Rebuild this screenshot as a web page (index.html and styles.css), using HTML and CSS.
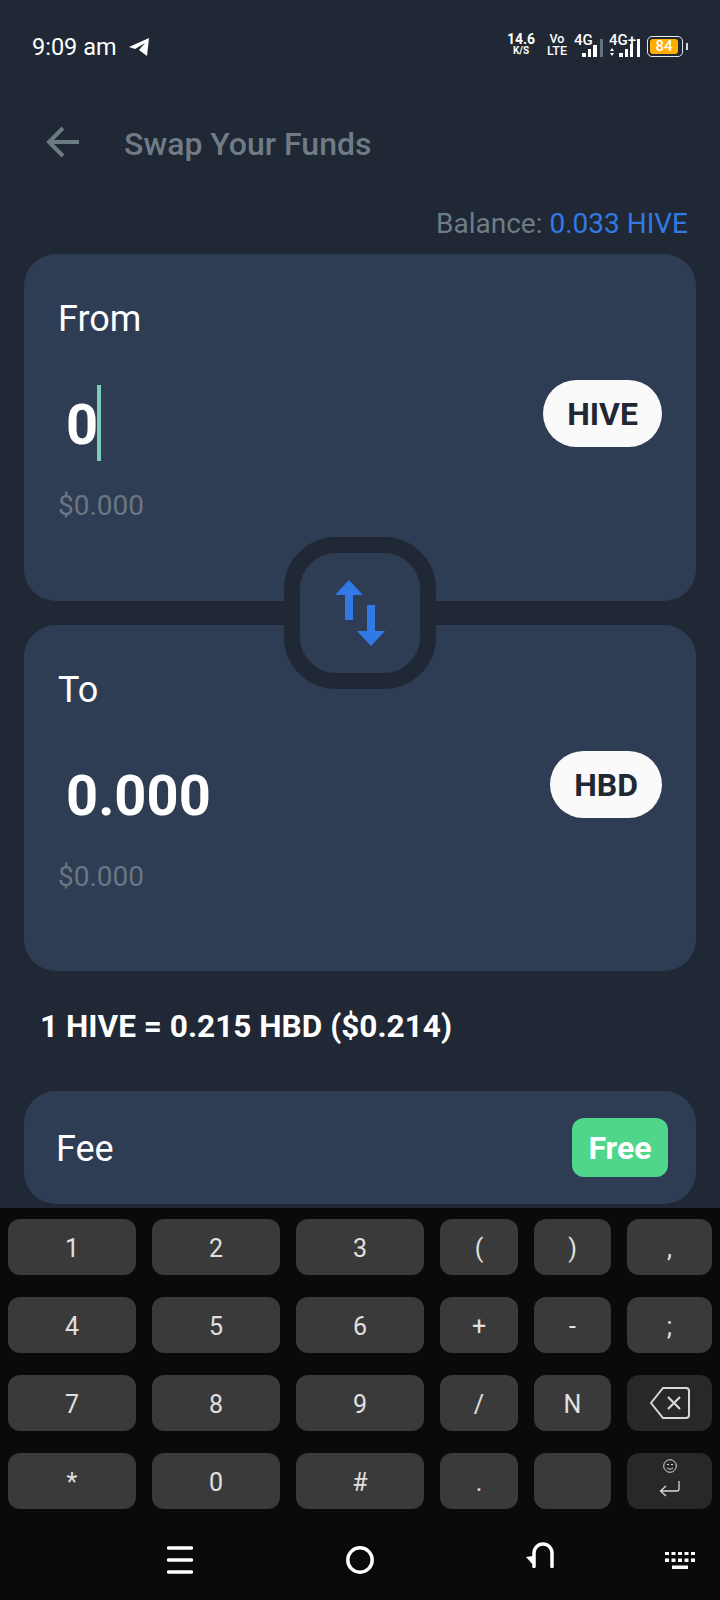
FILE: index.html
```html
<!DOCTYPE html>
<html lang="en">
<head>
    <meta charset="UTF-8">
    <meta name="viewport" content="width=device-width, initial-scale=1.0">
    <title>Swap Your Funds</title>
    <link rel="stylesheet" href="styles.css">
</head>
<body>
    <div class="screen">
        <div class="status-bar">
            <div class="status-left">
                <span class="clock">9:09 am</span>
                <svg class="plane" width="20" height="18" viewBox="0 0 20 18"><path d="M0 9 L20 0 L18 18 L10 12 L16 5 L6 11 Z" fill="#fff"/></svg>
            </div>
            <div class="status-right">
                <div class="stacked speed"><span class="big">14.6</span><span class="small">K/S</span></div>
                <div class="stacked volte"><span class="mid">Vo</span><span class="mid">LTE</span></div>
                <div class="signal signal-one">
                    <span class="net">4G</span>
                    <svg width="26" height="24" viewBox="0 0 26 24"><path d="M2 20h4v4H2zM8 16h3v8H8zM13 12h4v12h-4z" fill="#fff"/><path d="M20 6h3v18h-3z" fill="#68727c"/></svg>
                </div>
                <div class="signal signal-two">
                    <span class="net">4G+</span>
                    <svg width="32" height="24" viewBox="0 0 32 24"><path d="M2 18l2-3 2 3zM2 20l2 3 2-3z" fill="#fff"/><path d="M11 20h4v4h-4zM17 16h3v8h-3zM22 11h3v13h-3zM29 6h3v18h-3z" fill="#fff"/></svg>
                </div>
                <div class="battery"><span class="charge">84</span></div>
                <span class="battery-tip"></span>
            </div>
        </div>

        <div class="header">
            <svg class="back" width="34" height="32" viewBox="0 0 34 32"><path d="M33 16H3M17 2L3 16l14 14" fill="none" stroke="#6c7a84" stroke-width="4"/></svg>
            <h1 class="title">Swap Your Funds</h1>
        </div>

        <p class="balance">Balance: <span class="balance-value">0.033 HIVE</span></p>

        <div class="swap-cards">
            <div class="card">
                <div class="card-label">From</div>
                <div class="amount-row">
                    <div class="amount"><span class="digits">0</span><span class="caret"></span></div>
                    <div class="token">HIVE</div>
                </div>
                <div class="fiat">$0.000</div>
            </div>
            <div class="card card-to">
                <div class="card-label">To</div>
                <div class="amount-row">
                    <div class="amount"><span class="digits">0.000</span></div>
                    <div class="token">HBD</div>
                </div>
                <div class="fiat">$0.000</div>
            </div>
            <div class="swap-btn">
                <svg width="50" height="66" viewBox="0 0 50 66"><path d="M14 0L28 15H18V40H10V15H0Z" fill="#3279e6"/><path d="M32 25H40V51H50L36 66 22 51H32Z" fill="#3279e6"/></svg>
            </div>
        </div>

        <div class="rate">1 HIVE = 0.215 HBD ($0.214)</div>

        <div class="fee-card">
            <span class="fee-label">Fee</span>
            <span class="fee-badge">Free</span>
        </div>
    </div>

    <div class="keyboard">
        <div class="keys">
            <div class="key">1</div>
            <div class="key">2</div>
            <div class="key">3</div>
            <div class="key">(</div>
            <div class="key">)</div>
            <div class="key">,</div>
            <div class="key">4</div>
            <div class="key">5</div>
            <div class="key">6</div>
            <div class="key">+</div>
            <div class="key">-</div>
            <div class="key">;</div>
            <div class="key">7</div>
            <div class="key">8</div>
            <div class="key">9</div>
            <div class="key">/</div>
            <div class="key">N</div>
            <div class="key key-dark">
                <svg width="40" height="32" viewBox="0 0 40 32"><path d="M13 1H36a3 3 0 0 1 3 3V28a3 3 0 0 1-3 3H13L1 16Z" fill="none" stroke="#d8d8d8" stroke-width="2"/><path d="M18 10l12 12M30 10l-12 12" stroke="#d8d8d8" stroke-width="2.200"/></svg>
            </div>
            <div class="key">*</div>
            <div class="key">0</div>
            <div class="key">#</div>
            <div class="key">.</div>
            <div class="key"></div>
            <div class="key key-dark key-enter">
                <svg width="14" height="14" viewBox="0 0 14 14"><circle cx="7" cy="7" r="6.300" fill="none" stroke="#d8d8d8" stroke-width="1"/><path d="M4 5.500h2M8 5.500h2M4 9c2 1.500 4 1.500 6 0" fill="none" stroke="#d8d8d8" stroke-width="1"/></svg>
                <svg width="21" height="16" viewBox="0 0 21 16"><path d="M20 0v8a2 2 0 0 1-2 2H2M7 5l-5.500 5 5.500 5" fill="none" stroke="#d8d8d8" stroke-width="1.300"/></svg>
            </div>
        </div>
        <div class="nav">
            <svg class="nav-icon nav-menu" width="26" height="28" viewBox="0 0 26 28"><path d="M1.500 2h23M1.500 14h23M1.500 26h23" stroke="#fff" stroke-width="3.500" stroke-linecap="round"/></svg>
            <svg class="nav-icon" width="28" height="28" viewBox="0 0 28 28"><circle cx="14" cy="14" r="12.200" fill="none" stroke="#fff" stroke-width="3.500"/></svg>
            <svg class="nav-icon nav-back" width="28" height="26" viewBox="0 0 28 26"><path d="M8 24.500V11a9 9 0 0 1 18 0v13.500" fill="none" stroke="#fff" stroke-width="3.500" stroke-linecap="round"/><path d="M0 15l7-1 2 11z" fill="#fff"/></svg>
            <svg class="nav-icon nav-kb" width="30" height="17" viewBox="0 0 30 17"><path d="M0 0h4v3H0zM6.500 0h4v3h-4zM13 0h4v3h-4zM19.500 0h4v3h-4zM26 0h4v3h-4zM0 6.500h4v3.500H0zM6.500 6.500h4v3.500h-4zM13 6.500h4v3.500h-4zM19.500 6.500h4v3.500h-4zM26 6.500h4v3.500h-4zM7 13.500h16V17H7z" fill="#fff"/></svg>
        </div>
    </div>
</body>
</html>
```

FILE: styles.css
```css
* {
    box-sizing: border-box;
}
html, body {
    margin: 0;
    padding: 0;
}
body {
    width: 720px;
    height: 1600px;
    overflow: hidden;
    background-color: #1f2834;
    color: #ffffff;
    font-family: Roboto, "Liberation Sans", sans-serif;
    display: flex;
    flex-direction: column;
}
.screen {
    height: 1208px;
    overflow: hidden;
    padding: 0 24px;
}

/* status bar */
.status-bar {
    height: 94px;
    margin: 0 -24px;
    padding: 0 32px;
    display: flex;
    justify-content: space-between;
    align-items: center;
}
.status-left {
    display: flex;
    align-items: center;
    gap: 12px;
}
.clock {
    font-size: 23.500px;
}
.plane {
    margin-bottom: 1px;
}
.status-right {
    display: flex;
    align-items: flex-end;
    height: 24px;
    margin-bottom: 4px;
}
.stacked {
    display: flex;
    flex-direction: column;
    align-items: center;
    line-height: 12px;
}
.speed {
    width: 28px;
}
.big {
    font-size: 14px;
    font-weight: 700;
}
.small {
    font-size: 10px;
    font-weight: 700;
}
.volte {
    width: 20px;
    margin-left: 12px;
}
.mid {
    font-size: 12.500px;
    font-weight: 500;
}
.signal {
    height: 24px;
    position: relative;
}
.signal svg {
    display: block;
}
.signal-one {
    width: 26px;
    margin-left: 13px;
}
.signal-two {
    width: 32px;
    margin-left: 2px;
}
.net {
    position: absolute;
    top: 1px;
    font-size: 15px;
    font-weight: 500;
    line-height: 12px;
}
.signal-one .net {
    left: -6px;
}
.signal-two .net {
    left: 1px;
}
.battery {
    width: 36px;
    height: 21px;
    margin-left: 7px;
    padding: 2px;
    border: 1px solid #e8e8e8;
    border-radius: 5px;
}
.charge {
    display: block;
    width: 28px;
    height: 15px;
    background-color: #ffae00;
    border-radius: 3px;
    font-size: 15px;
    line-height: 15px;
    font-weight: 500;
    text-align: center;
}
.battery-tip {
    width: 2px;
    height: 7px;
    margin: 0 0 7px 3px;
    background-color: #d8d8d8;
}

/* header */
.header {
    height: 96px;
    display: flex;
    align-items: center;
    padding-left: 22px;
}
.back {
    margin-right: 44px;
}
.title {
    margin: 3px 0 0;
    font-size: 32px;
    font-weight: 500;
    color: #6f7b85;
}
.balance {
    margin: 17px 8px 13px 0;
    height: 34px;
    line-height: 34px;
    font-size: 28px;
    text-align: right;
    color: #6f7b85;
}
.balance-value {
    color: #3279e6;
}

/* swap cards */
.swap-cards {
    position: relative;
    display: flex;
    flex-direction: column;
    gap: 24px;
}
.card {
    height: 347px;
    padding: 45px 34px 0;
    background-color: #2e3d54;
    border-radius: 32px;
}
.card-to {
    height: 346px;
}
.card-label {
    font-size: 36px;
    line-height: 40px;
}
.amount-row {
    height: 76px;
    margin-top: 46px;
    display: flex;
    justify-content: space-between;
    align-items: flex-start;
}
.amount {
    height: 76px;
    padding-left: 8px;
    display: flex;
    align-items: center;
    font-size: 56px;
    font-weight: 700;
}
.digits {
    margin-top: 4px;
}
.caret {
    width: 4px;
    height: 76px;
    margin-left: -1px;
    background-color: #7ccbbd;
}
.token {
    margin-top: -5px;
    height: 67px;
    padding: 0 24px;
    line-height: 69px;
    font-size: 32px;
    font-weight: 700;
    color: #1f2834;
    background-color: #fafafa;
    border-radius: 34px;
}
.fiat {
    margin-top: 27px;
    font-size: 28px;
    line-height: 36px;
    color: #6a7683;
}
.swap-btn {
    position: absolute;
    left: 260px;
    top: 283px;
    width: 152px;
    height: 152px;
    display: flex;
    align-items: center;
    justify-content: center;
    background-color: #2e3d54;
    border: 16px solid #1f2834;
    border-radius: 52px;
}

/* rate and fee */
.rate {
    margin: 36px 0 44px 16px;
    font-size: 31.600px;
    line-height: 40px;
    font-weight: 700;
}
.fee-card {
    height: 113px;
    padding: 0 28px 0 32px;
    display: flex;
    justify-content: space-between;
    align-items: center;
    background-color: #2e3d54;
    border-radius: 32px;
}
.fee-label {
    font-size: 36px;
    margin-top: 2px;
}
.fee-badge {
    width: 96px;
    height: 59px;
    line-height: 61px;
    text-align: center;
    font-size: 32px;
    font-weight: 700;
    background-color: #4fd68b;
    border-radius: 12px;
}

/* keyboard */
.keyboard {
    flex: 1;
    background-color: #0a0a0a;
    padding-top: 11px;
}
.keys {
    padding: 0 8px;
    display: grid;
    grid-template-columns: 128px 128px 128px 78px 77px 85px;
    grid-auto-rows: 56px;
    gap: 22px 16px;
}
.key {
    display: flex;
    align-items: center;
    justify-content: center;
    padding-top: 2px;
    background-color: #3a3a3a;
    border-radius: 12px;
    color: #e0e0e0;
    font-size: 25px;
}
.key-dark {
    padding-top: 0;
    background-color: #282828;
}
.key-enter {
    flex-direction: column;
    gap: 8px;
    padding-bottom: 6px;
}
.nav {
    height: 91px;
    padding: 37px 0 0 90px;
    display: grid;
    grid-template-columns: 180px 180px 180px 90px;
    justify-items: center;
    align-items: start;
}
.nav-back {
    margin-top: -4px;
}
.nav-kb {
    justify-self: end;
    margin: 6px 25px 0 0;
}
```
